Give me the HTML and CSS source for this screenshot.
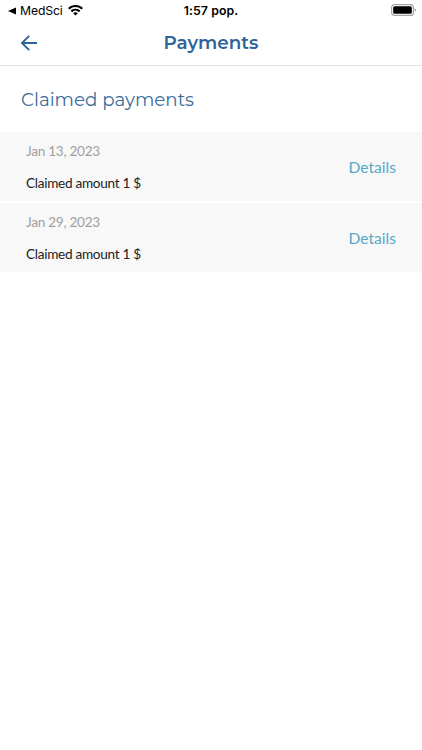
FILE: index.html
```html
<!DOCTYPE html>
<html lang="en">
<head>
<meta charset="utf-8">
<title>Payments</title>
<link rel="stylesheet" href="styles.css">
</head>
<body>
<div class="status">
  <div class="status-left">
    <svg class="back-app" width="8" height="8" viewBox="0 0 8 8"><path d="M0 4 8 .5v7z"/></svg>
    <span class="app-name">MedSci</span>
    <svg class="wifi" width="15" height="11" viewBox="0 0 15 11"><path d="M7.500 0C4.600 0 1.900 1.100 0 3l1.500 1.600a8.500 8.500 0 0 1 12 0L15 3C13.100 1.100 10.400 0 7.500 0zM7.500 3.700c-1.900 0-3.600.7-4.900 1.900l1.500 1.600a5 5 0 0 1 6.800 0l1.500-1.600a7.200 7.200 0 0 0-4.900-1.900zM7.500 7.300c-.9 0-1.700.3-2.300.9l2.300 2.400 2.300-2.400c-.6-.6-1.400-.9-2.300-.9z"/></svg>
  </div>
  <span class="time">1:57 pop.</span>
  <svg class="battery" width="25" height="12" viewBox="0 0 25 12"><rect x=".6" y=".6" width="21.800" height="10.800" rx="3" fill="none" stroke="#a6a6a6" stroke-width="1.200"/><rect x="2.200" y="2.200" width="18.600" height="7.600" rx="1.500"/><path d="M23.600 4.200v3.600c.7-.3 1.200-1 1.200-1.800s-.5-1.500-1.200-1.800z" fill="#888"/></svg>
</div>
<header class="bar">
  <svg class="arrow" width="18" height="16" viewBox="0 0 18 16"><path d="M17 8H2M9.200.8 2 8l7.200 7.200"/></svg>
  <h1><span class="title">Payments</span></h1>
</header>
<main>
  <h2><span class="subtitle">Claimed payments</span></h2>
  <ul class="list">
    <li><div><p class="date">Jan 13, 2023</p><p class="amount">Claimed amount 1 $</p></div><a>Details</a></li>
    <li><div><p class="date">Jan 29, 2023</p><p class="amount">Claimed amount 1 $</p></div><a>Details</a></li>
  </ul>
</main>
</body>
</html>
```
FILE: styles.css
```css
* { box-sizing: border-box; margin: 0; padding: 0; }
body { background: #fff; color: #222; font-family: Lato, sans-serif; }
.status { height: 21px; display: grid; grid-template-columns: 1fr auto 1fr; align-items: center; padding: 0 7px; font: 13px/20px Inter, sans-serif; color: #000; }
.status-left { display: flex; align-items: center; padding-left: 1px; }
.back-app { margin-top: 1px; }
.app-name { margin: 0 5px 0 4px; font-size: 12.2px; letter-spacing: -.1px; }
.wifi { margin-top: -1px; }
.time { font-weight: 600; font-size: 12.3px; letter-spacing: .1px; }
.battery { justify-self: end; margin: -2px -1px 0 0; }
.bar { height: 45px; border-bottom: 1px solid #e0e0e0; display: grid; grid-template-columns: 1fr auto 1fr; align-items: center; padding: 0 20px; }
.arrow path { fill: none; stroke: #2f6498; stroke-width: 1.9; }
h1 { font: 600 18.3px/42px Montserrat, Inter, sans-serif; color: #2f6498; }
h2 { height: 66px; padding-left: 21px; font: 400 18.3px/68px Montserrat, Inter, sans-serif; color: #3a6c9b; }
.list { list-style: none; display: grid; gap: 2px; }
li { height: 69px; background: #f8f8f8; padding: 0 26px; display: flex; align-items: center; justify-content: space-between; }
.date, .amount { font-size: 13.6px; line-height: 20px; }
.date { color: #a0a0a0; margin-bottom: 12px; letter-spacing: -.27px; }
.amount { letter-spacing: -.29px; }
a { color: #55aac8; font-size: 15.6px; line-height: 20px; }
```
